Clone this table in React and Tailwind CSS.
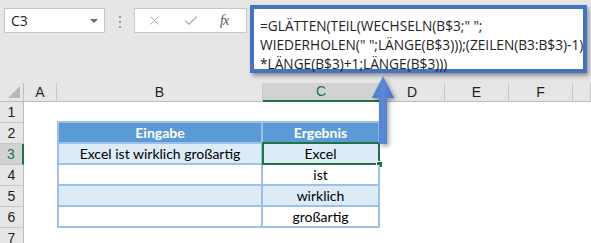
import { Check, X } from 'lucide-react';

const COLS = ['A', 'B', 'C', 'D', 'E', 'F', ''];
const ROWS = [1, 2, 3, 4, 5, 6, 7];

// table content in B2:C6
const TABLE = {
    2: ['Eingabe', 'Ergebnis'],
    3: ['Excel ist wirklich großartig', 'Excel'],
    4: ['', 'ist'],
    5: ['', 'wirklich'],
    6: ['', 'großartig'],
};

const FORMULA = [
    '=GLÄTTEN(TEIL(WECHSELN(B$3;" ";',
    'WIEDERHOLEN(" ";LÄNGE(B$3)));(ZEILEN(B3:B$3)-1)',
    '*LÄNGE(B$3)+1;LÄNGE(B$3)))',
];

function FormulaBar() {
    return (
        <div className="h-[83px] bg-[#e6e6e6] flex items-start font-['Open_Sans',sans-serif]">
            <div className="mt-2 ml-1 w-[101px] h-[25px] bg-white border border-[#c6c6c6] flex items-center justify-between pl-[6px] pr-[6px]">
                <span className="text-[14px] text-[#222]">C3</span>
                <span className="w-0 h-0 border-l-[4px] border-r-[4px] border-t-[4px] border-l-transparent border-r-transparent border-t-[#6b6b6b]" />
            </div>
            <div className="mt-[16px] ml-[14px] flex flex-col gap-[3px]">
                <span className="w-[2px] h-[2px] bg-[#9a9a9a]" />
                <span className="w-[2px] h-[2px] bg-[#9a9a9a]" />
                <span className="w-[2px] h-[2px] bg-[#9a9a9a]" />
            </div>
            <div className="mt-2 ml-[13px] w-[113px] h-[25px] bg-white border border-[#c6c6c6] flex items-center pl-[12px]">
                <X size={15} strokeWidth={1.6} className="text-[#b3b3b3]" />
                <Check size={16} strokeWidth={2} className="text-[#b3b3b3] ml-[21px]" />
                <span className="ml-[21px] text-[14px] italic font-['Liberation_Serif',serif] text-[#555] tracking-[-1px]">fx</span>
            </div>
            <div className="mt-[5px] ml-[3px] w-[337px] h-[68px] bg-white border-4 border-[#4472c4] shadow-[2px_3px_4px_rgba(0,0,0,0.35)] pl-[6px] pt-[7px]">
                {FORMULA.map((line) => (
                    <div key={line} className="text-[13.7px] leading-[19px] text-[#222] whitespace-nowrap">
                        {line}
                    </div>
                ))}
            </div>
        </div>
    );
}

function Arrow() {
    return (
        <svg className="absolute left-[370px] top-[74px] drop-shadow-[2px_2px_2px_rgba(0,0,0,0.35)]" width="26" height="74" viewBox="0 0 26 74">
            <defs>
                <linearGradient id="arrowFill" x1="0" x2="1" y1="0" y2="0">
                    <stop offset="0" stopColor="#4a78cc" />
                    <stop offset="0.5" stopColor="#5b8ad9" />
                    <stop offset="1" stopColor="#4672c4" />
                </linearGradient>
            </defs>
            <path d="M13 2 L24 24 L17 24 L17 70 L9 70 L9 24 L2 24 Z" fill="url(#arrowFill)" />
        </svg>
    );
}

function Cell({ row, col }) {
    const inTable = row >= 2 && row <= 6 && (col === 'B' || col === 'C');
    if (!inTable) return <div />;

    const text = TABLE[row][col === 'B' ? 0 : 1];
    const header = row === 2;
    const shaded = row === 3 || row === 5;
    const selected = row === 3 && col === 'C';

    const fill = header ? 'bg-[#5b9bd5] text-white font-bold' : shaded ? 'bg-[#ddebf7] text-black' : 'bg-white text-black';
    const edge = `border-[#9bc2e6] border-r-2 border-b-2 ${row === 2 ? 'border-t-2' : ''} ${col === 'B' ? 'border-l-2' : ''}`;

    return (
        <div className={`relative flex items-center justify-center text-[14px] ${fill} ${edge} ${row === 2 ? '-mt-[2px]' : ''}`}>
            {text}
            {selected && (
                <>
                    <span className="absolute -inset-[2px] border-2 border-[#217346] -left-[1px]" />
                    <span className="absolute -right-[5px] -bottom-[5px] w-[7px] h-[7px] bg-[#217346] border border-white" />
                </>
            )}
        </div>
    );
}

export default function App() {
    return (
        <div className="relative w-[591px] h-[243px] overflow-hidden bg-white">
            <FormulaBar />
            <div className="grid grid-cols-[24px_33px_206px_117px_65px_64px_64px_1fr] grid-rows-[19px_repeat(7,21px)] font-['Lato',sans-serif]">
                <div className="relative bg-[#e6e6e6] border-r border-b border-[#bdbdbd]">
                    <span className="absolute right-[3px] bottom-[3px] w-0 h-0 border-b-[12px] border-l-[12px] border-b-[#b8b8b8] border-l-transparent" />
                </div>
                {COLS.map((c) => (
                    <div
                        key={c || 'G'}
                        className={`flex items-center justify-center text-[14px] font-['Liberation_Sans',sans-serif] border-r border-[#c6c6c6] ${
                            c === 'C' ? 'bg-[#d2d2d2] text-[#217346] border-b-2 border-b-[#217346]' : 'bg-[#e6e6e6] text-[#222] border-b border-b-[#bdbdbd]'
                        }`}
                    >
                        {c}
                    </div>
                ))}
                {ROWS.map((r) => (
                    <div key={r} className="contents">
                        <div
                            className={`flex items-center justify-center text-[14px] font-['Liberation_Sans',sans-serif] border-b border-[#c6c6c6] ${
                                r === 3 ? 'bg-[#d2d2d2] text-[#217346] border-r-2 border-r-[#217346]' : 'bg-[#e6e6e6] text-[#222] border-r border-r-[#bdbdbd]'
                            }`}
                        >
                            {r}
                        </div>
                        {COLS.map((c) => (
                            <Cell key={c || 'G'} row={r} col={c} />
                        ))}
                    </div>
                ))}
            </div>
            <Arrow />
        </div>
    );
}
